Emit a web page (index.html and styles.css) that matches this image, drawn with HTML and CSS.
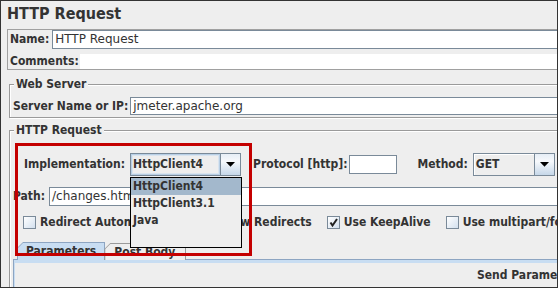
FILE: index.html
```html
<!DOCTYPE html>
<html>
<head>
<meta charset="utf-8">
<title>HTTP Request</title>
<link rel="stylesheet" href="styles.css">
</head>
<body>
<div class="frame">
  <div class="page">
    <div class="title">HTTP Request</div>

    <div class="namebox">
      <div class="row">
        <span class="lbl">Name:</span>
        <div class="field name-field">HTTP Request</div>
      </div>
      <div class="row">
        <span class="lbl">Comments:</span>
        <div class="area"></div>
      </div>
    </div>

    <fieldset class="group web">
      <legend>Web Server</legend>
      <div class="row">
        <span class="lbl">Server Name or IP:</span>
        <div class="field server-field">jmeter.apache.org</div>
      </div>
    </fieldset>

    <fieldset class="group req">
      <legend>HTTP Request</legend>
      <div class="impl-row">
        <span class="lbl">Implementation:</span>
        <div class="combo impl-combo">
          <span class="combo-text">HttpClient4</span>
          <span class="combo-btn"><svg width="9" height="5" viewBox="0 0 9 5"><polygon points="0,0 9,0 4.5,4.8" fill="#000"/></svg></span>
        </div>
        <span class="lbl proto-lbl">Protocol [http]:</span>
        <div class="field proto-field"></div>
        <span class="lbl method-lbl">Method:</span>
        <div class="combo method-combo">
          <span class="combo-text">GET</span>
          <span class="combo-btn"><svg width="9" height="5" viewBox="0 0 9 5"><polygon points="0,0 9,0 4.5,4.8" fill="#000"/></svg></span>
        </div>
      </div>

      <div class="path-row">
        <span class="lbl">Path:</span>
        <div class="field path-field">/changes.html</div>
      </div>

      <div class="check-row">
        <label class="cb"><span class="box"></span>Redirect Automatically</label>
        <label class="cb"><span class="box"></span>Follow Redirects</label>
        <label class="cb"><span class="box"><svg width="11" height="11" viewBox="0 0 11 11"><polyline points="2.5,5.5 4.5,8.5 9,2" fill="none" stroke="#222" stroke-width="2"/></svg></span>Use KeepAlive</label>
        <label class="cb"><span class="box"></span>Use multipart/form-data for POST</label>
      </div>

      <div class="tabs">
        <div class="tab selected"><div class="tab-in">Parameters</div></div>
        <div class="tab"><div class="tab-in">Post Body</div></div>
      </div>
      <div class="tab-body">
        <div class="send">Send Parameters With the Request:</div>
      </div>
    </fieldset>
  </div>

  <div class="popup">
    <div class="item sel">HttpClient4</div>
    <div class="item">HttpClient3.1</div>
    <div class="item">Java</div>
  </div>

  <div class="highlight"></div>
</div>
</body>
</html>
```

FILE: styles.css
```css
* { box-sizing: border-box; }

html, body {
  margin: 0;
  padding: 0;
  background: #eeeeee;
}

body {
  font-family: "DejaVu Sans Condensed", "DejaVu Sans", sans-serif;
  font-stretch: condensed;
  font-weight: bold;
  font-size: 12px;
  color: #333333;
}

.frame {
  position: relative;
  width: 558px;
  height: 288px;
  border: 1px solid #333333;
  overflow: hidden;
  background: #eeeeee;
}

.page {
  width: 760px;
}

.title {
  height: 28px;
  padding: 3px 0 0 6px;
  font-size: 16px;
  line-height: 19px;
}

.row {
  display: flex;
  align-items: center;
}

.lbl {
  white-space: nowrap;
  line-height: 15px;
}

.field {
  height: 19px;
  border: 1px solid #7a8a99;
  background: #ffffff;
  padding: 0 2px;
  font-family: "DejaVu Sans", sans-serif;
  font-stretch: normal;
  font-weight: normal;
  font-size: 12px;
  line-height: 17px;
  color: #333333;
  white-space: nowrap;
  overflow: hidden;
}

/* Name / Comments box */
.namebox {
  margin-left: 6px;
  border: 1px solid #a0a0a0;
  padding: 0 0 0 2px;
  display: flex;
  flex-direction: column;
  gap: 5px;
}

.name-field {
  flex: 1;
  margin-left: 3px;
}

.area {
  flex: 1;
  height: 15px;
  margin-left: 1px;
  background: #ffffff;
}

/* titled groups */
.group {
  margin: 0 0 0 8px;
  padding: 0 0 2px 3px;
  min-width: 0;
  border: 1px solid #9a9a9a;
  box-shadow: inset 1px 1px 0 #ffffff, 1px 1px 0 #ffffff;
}

.group legend {
  margin-left: 1px;
  padding: 0 2px;
  line-height: 15px;
  background: #eeeeee;
}

.web {
  margin-top: 7px;
  padding-top: 5px;
}

.server-field {
  flex: 1;
  height: 18px;
  margin-left: 2px;
}

.req {
  margin-top: 5px;
  padding-top: 15px;
}

/* implementation row */
.impl-row {
  display: flex;
  align-items: center;
  height: 23px;
  padding-left: 11px;
}

.combo {
  display: flex;
  height: 23px;
  border: 1px solid #7a8a99;
  background: #eeeeee;
}

.combo-text {
  flex: 1;
  padding-left: 2px;
  line-height: 21px;
  white-space: nowrap;
}

.combo-btn {
  width: 20px;
  border-left: 1px solid #7a8a99;
  background: linear-gradient(#e6eef6, #f7f9fc 35%, #c6d7e9);
  display: flex;
  align-items: center;
  justify-content: center;
}

.impl-combo {
  width: 111px;
  margin-left: 5px;
}

.impl-combo .combo-text {
  box-shadow: inset 0 0 0 1px #b8cfe5, inset 0 0 0 2px #d9e4ef;
}

.method-combo {
  width: 82px;
  margin-left: 5px;
}

.method-combo .combo-text {
  box-shadow: inset 1px 1px 0 #ffffff;
}

.proto-lbl {
  margin-left: 12px;
}

.proto-field {
  width: 48px;
  margin-left: 2px;
}

.method-lbl {
  margin-left: 20px;
}

/* path row */
.path-row {
  display: flex;
  align-items: center;
  margin-top: 11px;
}

.path-field {
  flex: 1;
  margin-left: 4px;
}

/* checkboxes */
.check-row {
  display: flex;
  align-items: center;
  gap: 15px;
  height: 21px;
  margin-top: 6px;
  padding-left: 10px;
}

.cb {
  display: flex;
  align-items: center;
  gap: 4px;
  white-space: nowrap;
  line-height: 15px;
}

.box {
  width: 13px;
  height: 13px;
  border: 1px solid #7a8a99;
  background: linear-gradient(135deg, #ffffff, #d3e0ee);
  display: flex;
  align-items: center;
  justify-content: center;
}

/* tabs */
.tabs {
  display: flex;
  margin-top: 9px;
  padding-left: 4px;
  margin-bottom: -1px;
}

.tab {
  position: relative;
  z-index: 1;
  height: 18px;
  padding: 1px 1px 0 1px;
  background: #9a9a9a;
  clip-path: polygon(6px 0, 100% 0, 100% 100%, 0 100%, 0 6px);
}

.tab + .tab {
  margin-left: -1px;
  margin-top: 1px;
  height: 17px;
}

.tab-in {
  height: 100%;
  background: #eeeeee;
  clip-path: polygon(5px 0, 100% 0, 100% 100%, 0 100%, 0 5px);
  padding: 0 10px 0 9px;
  line-height: 16px;
}

.tab.selected {
  background: #8da5c2;
}

.tab.selected .tab-in {
  background: #c8ddf2;
  padding: 0 8px 0 8px;
}

.tab-body {
  height: 40px;
  border-top: 1px solid #8da5c2;
  border-left: 1px solid #8da5c2;
  box-shadow: inset 1px 3px 0 #c8ddf2;
  padding: 8px 0 0 463px;
}

.send {
  line-height: 15px;
  white-space: nowrap;
}

/* popup list (overlay) */
.popup {
  position: absolute;
  left: 129px;
  top: 176px;
  width: 112px;
  height: 71px;
  border: 1px solid #000000;
  background: #eeeeee;
  z-index: 5;
}

.item {
  height: 17px;
  line-height: 17px;
  padding: 0 2px;
  white-space: nowrap;
}

.item.sel {
  background: #a3b8cc;
}

/* red annotation rectangle (overlay) */
.highlight {
  position: absolute;
  left: 14px;
  top: 142px;
  width: 237px;
  height: 113px;
  border: 3px solid #c40000;
  z-index: 6;
}
```
